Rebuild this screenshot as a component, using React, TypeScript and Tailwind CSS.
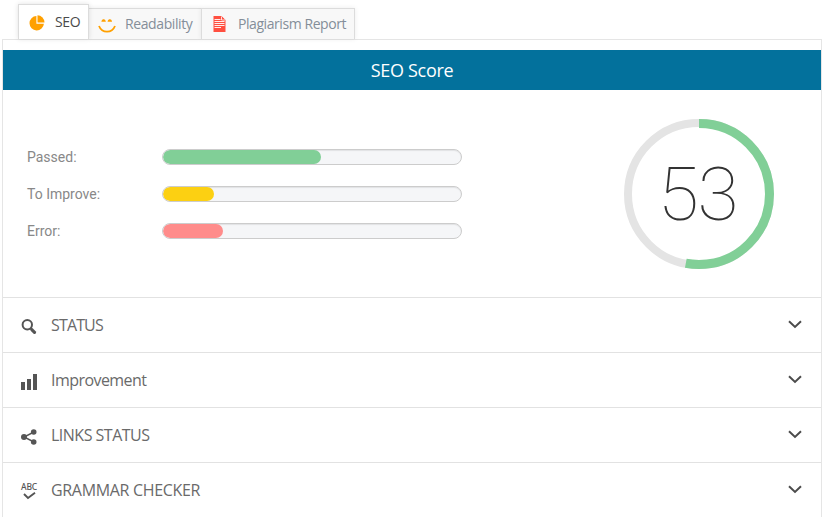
import type { ReactNode } from 'react';

const UI = "font-['Open_Sans','Noto_Sans',sans-serif]";

const PieIcon = () => (
  <svg width="16" height="16" viewBox="0 0 16 16" fill="#ffa000">
    <path d="M7.400 1v7.700h7.500A7.200 7.200 0 1 1 7.400 1Z" />
    <path d="M8.500 .2a7.200 7.200 0 0 1 7 7.200h-7Z" />
  </svg>
);

const SmileIcon = () => (
  <svg width="18" height="16" viewBox="0 0 18 16" fill="none" stroke="#ffa000">
    <path d="M1 8c1.500 3.800 4.500 5.700 8 5.700s6.500-1.900 8-5.700" strokeWidth="1.800" />
    <path d="M4.100 3.100c.3-1.700 2.700-1.700 3 0Z M10.300 3.100c.3-1.700 2.700-1.700 3 0Z" fill="#ffa000" strokeWidth="1.200" />
  </svg>
);

const ReportIcon = () => (
  <svg width="13" height="16" viewBox="0 0 13 16">
    <path d="M.5 0H8.500L12.500 4V16H.5Z" fill="#ff4f40" />
    <path d="M8.500 .5V4H12" fill="#ff4f40" stroke="#fff" strokeWidth=".8" />
    <path d="M1.500 3.500h6M1.500 5.500h10M1.500 7.500h10M1.500 9.500h10M1.500 11.500h6.500" stroke="#fff" strokeWidth=".9" />
  </svg>
);

const SearchIcon = () => (
  <svg width="18" height="18" viewBox="0 0 18 18" fill="none" stroke="#555">
    <circle cx="7.300" cy="6.800" r="4.700" strokeWidth="2" />
    <path d="m10.400 10.200 1.800 1.800" strokeWidth="2" />
    <path d="m12 11.800 2.500 2.500" strokeWidth="3.200" strokeLinecap="round" />
  </svg>
);

const BarsIcon = () => (
  <svg width="18" height="18" viewBox="0 0 18 18" fill="#555">
    <path d="M1 9h4v8H1zM7 6h4v11H7zM13 1h4v16h-4z" />
  </svg>
);

const ShareIcon = () => (
  <svg width="18" height="18" viewBox="0 0 18 18" fill="#555">
    <path d="M14 4 4 9l10 5" fill="none" stroke="#555" strokeWidth="1.400" />
    <circle cx="4" cy="9" r="3" />
    <circle cx="13.700" cy="4" r="2.800" />
    <circle cx="13.700" cy="14" r="2.800" />
  </svg>
);

const GrammarIcon = () => (
  <div className="flex h-[18px] w-[18px] flex-col items-center">
    <span className="font-['Noto_Sans',sans-serif] text-[8.500px] font-medium leading-[8px] tracking-[-0.200px] text-[#555]">ABC</span>
    <svg width="14" height="10" viewBox="0 0 14 10">
      <path d="m2 3 4 4 7-5.200" fill="none" stroke="#555" strokeWidth="1.900" />
    </svg>
  </div>
);

const Chevron = () => (
  <svg width="14" height="9" viewBox="0 0 14 9" fill="none" stroke="#4b4b4b" strokeWidth="2">
    <path d="m1 1.300 6 5.600 6-5.600" />
  </svg>
);

const meters = [
  { label: 'Passed:', fill: 'w-[158px] bg-[#81cf97]' },
  { label: 'To Improve:', fill: 'w-[51px] bg-[#fcd012]' },
  { label: 'Error:', fill: 'w-[60px] bg-[#ff8c8b]' },
];

const sections: { title: string; icon: ReactNode; spacing: string }[] = [
  { title: 'STATUS', icon: <SearchIcon />, spacing: 'tracking-[-0.850px]' },
  { title: 'Improvement', icon: <BarsIcon />, spacing: 'tracking-[-0.550px]' },
  { title: 'LINKS STATUS', icon: <ShareIcon />, spacing: 'tracking-[-0.500px]' },
  { title: 'GRAMMAR CHECKER', icon: <GrammarIcon />, spacing: 'tracking-[-0.320px]' },
];

export default function App() {
  return (
    <div className={`h-[517px] w-[826px] overflow-hidden bg-white pl-[2px] pt-1 ${UI}`}>
      <div className="flex h-[35px] items-end pl-4">
        <div className="z-10 flex h-[35px] w-[71px] items-center border border-b-0 border-[#dcdcdc] bg-white pl-[10px] shadow-[0_0_5px_rgba(0,0,0,0.12)]">
          <div className="pt-px"><PieIcon /></div>
          <span className="ml-[10px] pb-px text-[14px] tracking-[-0.400px] text-[#4a4a4a]">SEO</span>
        </div>
        <div className="flex h-[31px] w-[112px] items-center border-t border-[#dcdcdc] bg-[#f8f8f8] pl-[9px] shadow-[0_0_5px_rgba(0,0,0,0.08)]">
          <div className="mt-[3px]"><SmileIcon /></div>
          <span className="ml-[9px] pb-px text-[14px] tracking-[-0.400px] text-[#848e99]">Readability</span>
        </div>
        <div className="flex h-[31px] w-[154px] items-center border border-b-0 border-[#dcdcdc] bg-[#f8f8f8] pl-[11px] shadow-[0_0_5px_rgba(0,0,0,0.08)]">
          <ReportIcon />
          <span className="ml-3 whitespace-nowrap pb-px text-[14px] tracking-[-0.430px] text-[#848e99]">Plagiarism Report</span>
        </div>
      </div>

      <div className="h-[478px] w-[820px] border border-b-0 border-[#e5e5e5] pt-[10px]">
        <h1 className="flex h-10 items-center justify-center bg-[#03719c] pt-px text-[18px] tracking-[-0.300px] text-white">SEO Score</h1>

        <div className="flex h-[207px] items-center justify-between pl-6 pr-[47px]">
          <div className="flex flex-col gap-[21px]">
            {meters.map((m) => (
              <div key={m.label} className="flex h-4 items-center">
                <span className="w-[135px] pt-[2px] font-[Roboto,sans-serif] text-[14px] text-[#888]">{m.label}</span>
                <div className="h-4 w-[300px] overflow-hidden rounded-full border border-[#ccc] bg-[#f5f6f8] shadow-[inset_0_1px_1px_rgba(0,0,0,0.08)]">
                  <div className={`h-full rounded-full ${m.fill}`} />
                </div>
              </div>
            ))}
          </div>
          <div className="grid size-[150px] place-items-center">
            <svg className="col-start-1 row-start-1 -rotate-90" width="150" height="150" viewBox="0 0 150 150" fill="none" strokeWidth="8">
              <circle cx="75" cy="75" r="71" stroke="#e4e4e4" />
              <circle cx="75" cy="75" r="70.500" strokeWidth="9" stroke="#81cf97" pathLength="100" strokeDasharray="53 47" />
            </svg>
            <span className="col-start-1 row-start-1 pr-[3px] pt-px font-[Roboto,sans-serif] text-[75px] font-thin leading-none tracking-[-1.300px] text-[#333]">53</span>
          </div>
        </div>

        {sections.map((s) => (
          <div key={s.title} className="flex h-[55px] items-center border-t border-[#e2e2e2] pl-[17px] pr-[19px] text-[#6a6a6a]">
            <div className="mt-[3px]">{s.icon}</div>
            <span className={`ml-[13px] flex-1 pb-px text-[16px] font-normal ${s.spacing}`}>{s.title}</span>
            <div className="mb-[2px]"><Chevron /></div>
          </div>
        ))}
      </div>
    </div>
  );
}
